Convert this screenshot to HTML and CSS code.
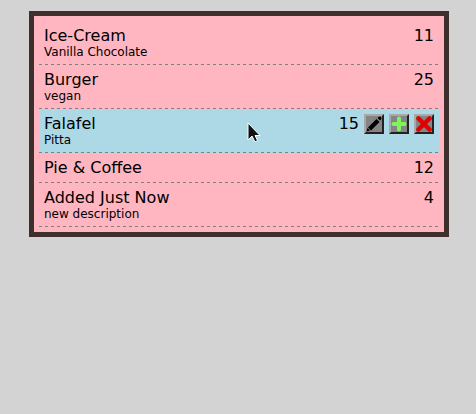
FILE: index.html
```html
<!DOCTYPE html>
<html lang="en">
<head>
<meta charset="utf-8">
<title>Items</title>
<link rel="stylesheet" href="styles.css">
</head>
<body>
<ul class="list">
  <li class="row">
    <div class="text"><div class="name">Ice-Cream</div><div class="desc">Vanilla Chocolate</div></div>
    <span class="count">11</span>
  </li>
  <li class="row">
    <div class="text"><div class="name">Burger</div><div class="desc">vegan</div></div>
    <span class="count">25</span>
  </li>
  <li class="row active">
    <div class="text"><div class="name">Falafel</div><div class="desc">Pitta</div></div>
    <span class="count">15</span>
    <div class="actions">
      <button class="action" type="button" aria-label="Edit">
        <svg viewBox="0 0 16 16" fill="#000"><path d="M0.500 15.500l1-3.500 2.500 2.500z"/><path d="M2 11.500l8.500-8.500 3 3-8.500 8.500z"/><path d="M11.500 2l1-1q1.500-1 2.500 0t0 2.500l-1 1z"/></svg>
      </button>
      <button class="action" type="button" aria-label="Add">
        <svg viewBox="0 0 16 16" fill="none" stroke="#7cf65a" stroke-width="4" stroke-linecap="round"><path d="M8 2.500v11M2.500 8h11"/></svg>
      </button>
      <button class="action" type="button" aria-label="Delete">
        <svg viewBox="0 0 16 16" fill="none" stroke="#e00000" stroke-width="4.500" stroke-linecap="round"><path d="M2.500 2.500l11 11M13.500 2.500l-11 11"/></svg>
      </button>
    </div>
    <svg class="pointer" viewBox="0 0 14 21" aria-hidden="true"><path d="M1 1v17l4-4 3 6 2.500-1.500-2.500-5h5z" fill="#111" stroke="#fff" stroke-linejoin="round"/></svg>
  </li>
  <li class="row">
    <div class="text"><div class="name">Pie &amp; Coffee</div></div>
    <span class="count">12</span>
  </li>
  <li class="row">
    <div class="text"><div class="name">Added Just Now</div><div class="desc">new description</div></div>
    <span class="count">4</span>
  </li>
</ul>
</body>
</html>
```
FILE: styles.css
```css
body {
  margin: 11px 27px 0 29px;
  background: #d3d3d3;
  color: #000;
  font: 16px/19px "DejaVu Sans", sans-serif;
}

.list {
  margin: 0;
  padding: 5px;
  border: 5px solid #3e2e2c;
  background: #ffb6c1;
  list-style: none;
}

/* The dashed rule is drawn as a background to fix its 3px rhythm */
.row {
  position: relative;
  display: flex;
  align-items: flex-start;
  gap: 5px;
  padding: 5px 5px 6px;
  background-image: linear-gradient(to right, #808080 50%, transparent 50%);
  background-position: left bottom;
  background-size: 6px 1px;
  background-repeat: repeat-x;
}

.active {
  background-color: #add8e6;
}

.text {
  flex: 1;
}

.desc {
  font-size: 12px;
  line-height: 14px;
}

.actions {
  display: flex;
  gap: 5px;
}

.action {
  box-sizing: border-box;
  width: 20px;
  height: 20px;
  padding: 0;
  border: 2px solid;
  border-color: #a9a9a9 #222 #222 #a9a9a9;
  background: #858585;
}

.action svg {
  display: block;
  width: 16px;
  height: 16px;
}

/* Mouse pointer over the hovered row */
.pointer {
  position: absolute;
  left: 208px;
  top: 13px;
  width: 14px;
  height: 21px;
}
```
